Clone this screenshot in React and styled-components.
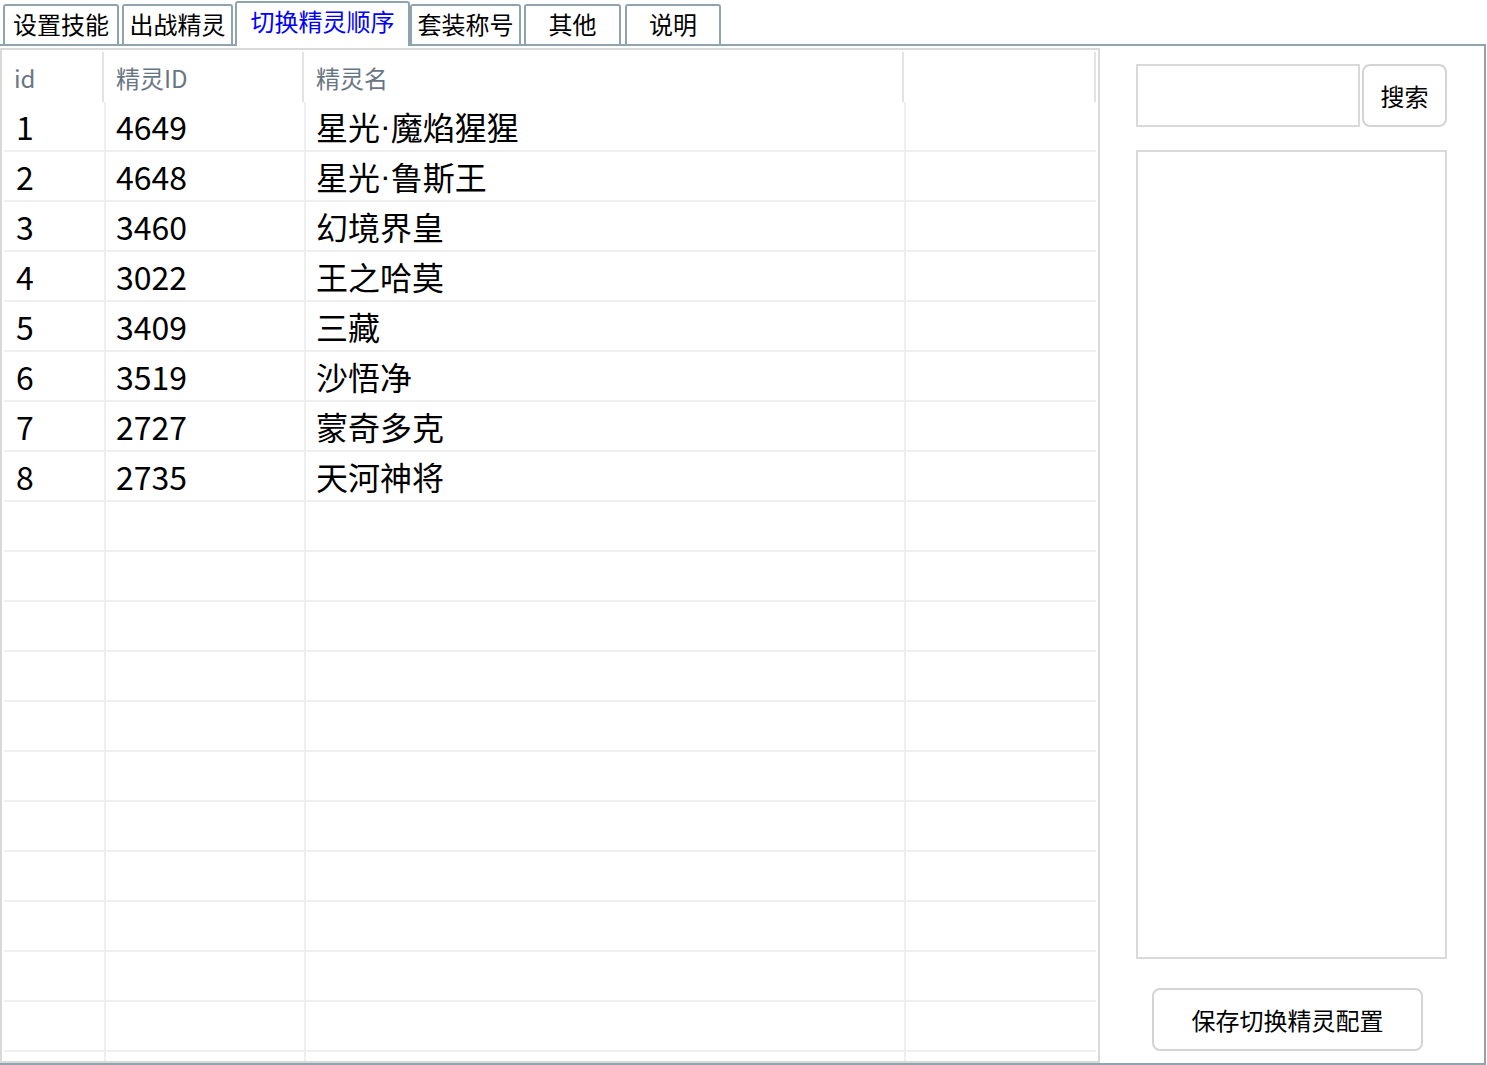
import React from 'react';
import styled, { createGlobalStyle } from 'styled-components';

const GlobalStyle = createGlobalStyle`
  html, body {
    margin: 0;
    padding: 0;
    background: #ffffff;
  }
  body {
    font-family: "Noto Sans CJK SC", "Microsoft YaHei", sans-serif;
    color: #000;
  }
`;

const Window = styled.div`
  width: 1487px;
  height: 1065px;
  overflow: hidden;
  background: #fff;
`;

const TabStrip = styled.div`
  display: flex;
  align-items: flex-end;
  height: 44px;
  position: relative;
  z-index: 2;
`;

const Tab = styled.div`
  box-sizing: border-box;
  width: ${(props) => props.$w}px;
  margin-left: ${(props) => props.$ml || 0}px;
  height: ${(props) => (props.$active ? 45 : 40)}px;
  margin-bottom: ${(props) => (props.$active ? -2 : 0)}px;
  border: 2px solid #90a4ae;
  border-bottom: none;
  border-radius: 3px 3px 0 0;
  background: #fff;
  display: flex;
  align-items: center;
  justify-content: center;
  padding-bottom: ${(props) => (props.$active ? 8 : 2)}px;
  font-size: 24px;
  line-height: 1;
  color: ${(props) => (props.$active ? '#0000ff' : '#000')};
  white-space: nowrap;
  position: relative;
  z-index: ${(props) => (props.$active ? 3 : 1)};
`;

const Panel = styled.div`
  box-sizing: border-box;
  width: 1486px;
  height: 1021px;
  border-top: 2px solid #90a4ae;
  border-right: 2px solid #90a4ae;
  border-bottom: 2px solid #90a4ae;
  display: flex;
  align-items: flex-start;
`;

const Grid = styled.div`
  box-sizing: border-box;
  margin-top: 2px;
  width: 1100px;
  height: 1015px;
  border: 2px solid #d9d9d9;
  overflow: hidden;
  flex-shrink: 0;
`;

const HeaderRow = styled.div`
  display: flex;
  height: 52px;
`;

const HeaderCell = styled.div`
  box-sizing: border-box;
  width: ${(props) => props.$w}px;
  margin-top: 2px;
  height: 50px;
  border-right: 2px solid #e3e3e3;
  padding-left: 12px;
  display: flex;
  align-items: center;
  font-size: 24px;
  color: #687684;
`;

const Row = styled.div`
  box-sizing: border-box;
  display: flex;
  margin-left: 2px;
  width: 1092px;
  height: 50px;
  border-bottom: 2px solid #efefef;
`;

const Cell = styled.div`
  box-sizing: border-box;
  width: ${(props) => props.$w}px;
  border-right: ${(props) => (props.$last ? 'none' : '2px solid #efefef')};
  padding-left: ${(props) => props.$pl || 10}px;
  display: flex;
  align-items: center;
  font-size: 32px;
  color: #000;
  white-space: nowrap;
`;

const Dot = styled.span`
  font-family: "Liberation Sans", Arial, sans-serif;
`;

const Side = styled.div`
  display: flex;
  flex-direction: column;
  padding: 18px 0 0 36px;
`;

const SearchRow = styled.div`
  display: flex;
  height: 63px;
`;

const SearchInput = styled.input`
  box-sizing: border-box;
  width: 224px;
  height: 63px;
  border: 2px solid #d9d9d9;
  outline: none;
  margin: 0;
  padding: 0 8px;
  font-size: 24px;
  font-family: inherit;
  background: #fff;
`;

const Button = styled.button`
  box-sizing: border-box;
  width: ${(props) => props.$w}px;
  height: 63px;
  margin: 0 0 0 ${(props) => props.$ml || 0}px;
  border: 2px solid #d4d4d4;
  border-radius: 8px;
  background: #fff;
  font-family: inherit;
  font-size: 24px;
  color: #000;
  padding: 0;
  cursor: pointer;
`;

const ListBox = styled.div`
  box-sizing: border-box;
  margin-top: 23px;
  width: 311px;
  height: 809px;
  border: 2px solid #d9d9d9;
`;

const SaveWrap = styled.div`
  margin-top: 29px;
  padding-left: 16px;
`;

const tabs = [
  { label: '设置技能', w: 116, ml: 3 },
  { label: '出战精灵', w: 111, ml: 3 },
  { label: '切换精灵顺序', w: 175, ml: 2, active: true },
  { label: '套装称号', w: 111, ml: 0 },
  { label: '其他', w: 97, ml: 3 },
  { label: '说明', w: 96, ml: 4 },
];

const pets = [
  [1, 4649, '星光·魔焰猩猩'],
  [2, 4648, '星光·鲁斯王'],
  [3, 3460, '幻境界皇'],
  [4, 3022, '王之哈莫'],
  [5, 3409, '三藏'],
  [6, 3519, '沙悟净'],
  [7, 2727, '蒙奇多克'],
  [8, 2735, '天河神将'],
];

const emptyRows = Array.from({ length: 12 });

// the middle dot is full width in the CJK font, so give it a latin one
const renderName = (name) =>
  name.split('·').map((part, i) => (
    <React.Fragment key={i}>
      {i > 0 && <Dot>·</Dot>}
      {part}
    </React.Fragment>
  ));

export default function App() {
  return (
    <Window>
      <GlobalStyle />
      <TabStrip>
        {tabs.map((t) => (
          <Tab key={t.label} $w={t.w} $ml={t.ml} $active={t.active}>
            {t.label}
          </Tab>
        ))}
      </TabStrip>
      <Panel>
        <Grid>
          <HeaderRow>
            <HeaderCell $w={102}>id</HeaderCell>
            <HeaderCell $w={200}>精灵ID</HeaderCell>
            <HeaderCell $w={600}>精灵名</HeaderCell>
            <HeaderCell $w={192} />
          </HeaderRow>
          {pets.map(([id, petId, name]) => (
            <Row key={id}>
              <Cell $w={102} $pl={12}>{id}</Cell>
              <Cell $w={200}>{petId}</Cell>
              <Cell $w={600}>{renderName(name)}</Cell>
              <Cell $w={190} $last />
            </Row>
          ))}
          {emptyRows.map((_, i) => (
            <Row key={'e' + i}>
              <Cell $w={102} />
              <Cell $w={200} />
              <Cell $w={600} />
              <Cell $w={190} $last />
            </Row>
          ))}
        </Grid>
        <Side>
          <SearchRow>
            <SearchInput />
            <Button $w={85} $ml={2}>搜索</Button>
          </SearchRow>
          <ListBox />
          <SaveWrap>
            <Button $w={271}>保存切换精灵配置</Button>
          </SaveWrap>
        </Side>
      </Panel>
    </Window>
  );
}
